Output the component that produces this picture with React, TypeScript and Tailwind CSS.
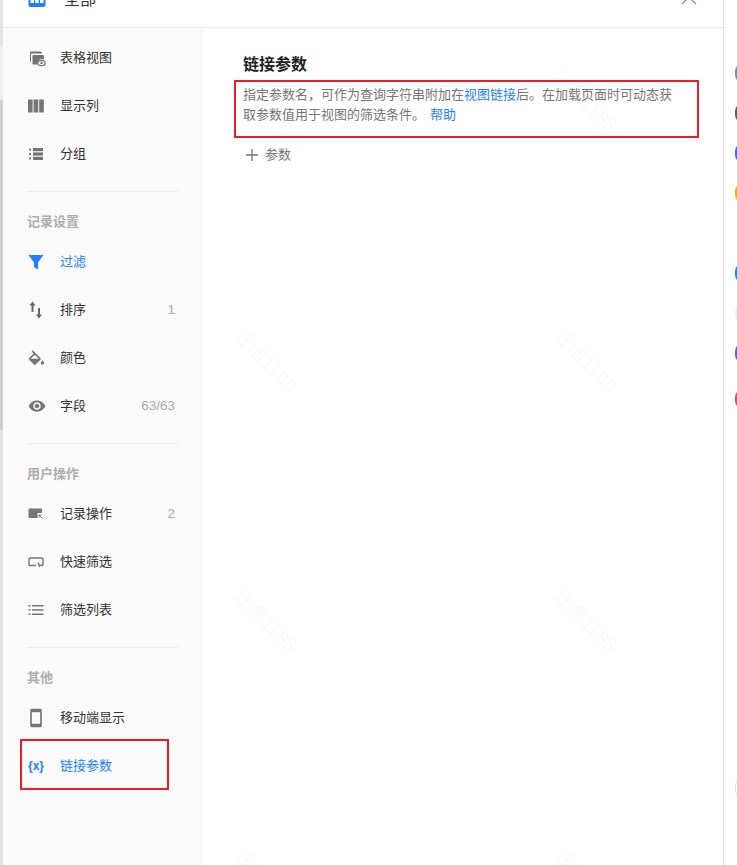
import type { ReactNode } from 'react';
import { MdSmartphone, MdVisibility } from 'react-icons/md';

const font = { fontFamily: '"Liberation Sans", "Noto Sans CJK SC", sans-serif' };

const IconTable = () => (
  <svg width="18" height="18" viewBox="0 0 18 18" fill="none">
    <path d="M3 2.500h9.500a1.500 1.500 0 0 1 1.500 1.500v.5H4a1 1 0 0 0-1 1V13H2.500A.5.5 0 0 1 2 12.500V3.500a1 1 0 0 1 1-1z" fill="#757575" />
    <path d="M5.500 6H15a1 1 0 0 1 1 1v3.500a4.500 4.500 0 0 0-6.500 5H5.500a1 1 0 0 1-1-1V7a1 1 0 0 1 1-1z" fill="#757575" />
    <ellipse cx="13.500" cy="14" rx="3.700" ry="2.600" stroke="#757575" strokeWidth="1.200" />
    <circle cx="13.500" cy="14" r="1.200" fill="#757575" />
  </svg>
);

const IconColumns = () => (
  <svg width="16" height="14" viewBox="0 0 16 14" fill="#757575">
    <rect x="0" y="0.500" width="4.600" height="13" />
    <rect x="5.600" y="0.500" width="4.600" height="13" />
    <rect x="11.200" y="0.500" width="4.600" height="13" />
  </svg>
);

const IconGroup = () => (
  <svg width="16" height="16" viewBox="0 0 16 16" fill="#757575">
    <rect x="1" y="2.500" width="2" height="2" />
    <rect x="1" y="7" width="2" height="2" />
    <rect x="1" y="11.500" width="2" height="2" />
    <rect x="5" y="2" width="10" height="3.200" />
    <rect x="5" y="6.400" width="10" height="3.200" />
    <rect x="5" y="10.800" width="10" height="3.200" />
  </svg>
);

const IconFilter = () => (
  <svg width="16" height="16" viewBox="0 0 16 16" fill="#1e80ff">
    <path d="M0.500 1h15L10 8.500V15.500L6 13V8.500z" />
  </svg>
);

const IconSort = () => (
  <svg width="16" height="18" viewBox="0 0 16 18" fill="#666">
    <path d="M4.500 0.500L7.500 4.500H5.500V11H3.500V4.500H1.500z" />
    <path d="M11 17.500L8 13.500H10V7H12V13.500H14z" />
  </svg>
);

const IconFill = () => (
  <svg width="17" height="16" viewBox="2 0 20 18" fill="#757575">
    <path d="M16.560 8.940L7.620 0 6.210 1.410l2.380 2.380-5.150 5.150c-.59.59-.59 1.540 0 2.120l5.500 5.500c.29.29.68.44 1.060.44s.77-.15 1.060-.44l5.500-5.500c.59-.58.59-1.530 0-2.120zM5.210 10L10 5.210 14.790 10H5.210zM19 11.500s-2 2.170-2 3.500c0 1.100.9 2 2 2s2-.9 2-2c0-1.330-2-3.500-2-3.500z" />
  </svg>
);

const IconAction = () => (
  <svg width="16" height="14" viewBox="0 0 16 14">
    <path d="M1.500 1.500H13a1 1 0 0 1 1 1v3.500H9.500V11H1.500a1 1 0 0 1-1-1V2.500a1 1 0 0 1 1-1z" fill="#757575" />
    <path d="M11 8l3.500 3.500M11 8v2.500M11 8h2.500" stroke="#757575" strokeWidth="1" fill="none" />
  </svg>
);

const IconQuick = () => (
  <svg width="16" height="14" viewBox="0 0 16 14" fill="none" stroke="#757575" strokeWidth="1.400">
    <path d="M8 10.500H2a1 1 0 0 1-1-1V4a1 1 0 0 1 1-1h12a1 1 0 0 1 1 1v5.500a1 1 0 0 1-1 1h-1" />
    <path d="M10 7.500l1.500 3.500 1-1.500" />
  </svg>
);

const IconList = () => (
  <svg width="16" height="12" viewBox="0 0 16 12" fill="#757575">
    <rect x="0.500" y="1" width="2" height="1.500" />
    <rect x="0.500" y="5.200" width="2" height="1.500" />
    <rect x="0.500" y="9.500" width="2" height="1.500" />
    <rect x="4" y="1" width="11.500" height="1.500" />
    <rect x="4" y="5.200" width="11.500" height="1.500" />
    <rect x="4" y="9.500" width="11.500" height="1.500" />
  </svg>
);

function Row({ icon, label, count, active }: { icon: ReactNode; label: string; count?: string; active?: boolean }) {
  return (
    <div className="h-[48px] flex items-center pl-[25px] pr-[28px]">
      <div className="w-[32px] flex items-center shrink-0">{icon}</div>
      <span className={`text-[13px] ${active ? 'text-[#1e80ff]' : 'text-[#333]'}`}>{label}</span>
      {count && <span className="ml-auto text-[13.500px] text-[#aaa]">{count}</span>}
    </div>
  );
}

function Section({ title }: { title: string }) {
  return (
    <>
      <div className="mx-[24px] mt-[13px] border-t border-[#eeeeee]" />
      <div className="h-[46px] pl-[24px] pt-[20px] text-[13px] leading-[20px] font-bold text-[#adadad]">{title}</div>
    </>
  );
}

function Watermark({ className }: { className: string }) {
  return (
    <span className={`absolute rotate-[45deg] whitespace-nowrap text-[19.500px] leading-[20px] text-black/[0.035] ${className}`}>
      汪浩1188
    </span>
  );
}

function Dot({ className }: { className: string }) {
  return (
    <div className="h-[40px] shrink-0">
      <div className={`w-[14px] h-[18px] rounded-full ${className}`} />
    </div>
  );
}

export default function App() {
  return (
    <div className="relative w-[737px] h-[865px] overflow-hidden bg-white flex" style={font}>
      <div className="w-[3px] shrink-0 flex flex-col">
        <div className="h-[46px] bg-[#e6e6e6]" />
        <div className="h-[54px] bg-[#efefef]" />
        <div className="h-[330px] bg-[#cfcfcf]" />
        <div className="flex-1 bg-[#e2e2e2]" />
      </div>

      <div className="w-[721px] shrink-0 flex flex-col border-r border-[#dddddd]">
        <div className="h-[28px] shrink-0 border-b border-[#e8e8e8] overflow-hidden">
          <div className="flex items-center -mt-[18px] h-[36px] pl-[25px] pr-[26px]">
            <svg width="18" height="18" viewBox="0 0 18 18" className="shrink-0">
              <rect x="0.500" y="2" width="17" height="14" rx="2" fill="#1e80ff" />
              <rect x="2.500" y="7.500" width="3.500" height="4.500" fill="#fff" />
              <rect x="7.200" y="7.500" width="3.500" height="4.500" fill="#fff" />
              <rect x="12" y="7.500" width="3.500" height="4.500" fill="#fff" />
            </svg>
            <span className="ml-[18px] text-[16px] text-[#333]">全部</span>
            <svg width="16" height="16" viewBox="0 0 16 16" className="ml-auto mb-[6px]" fill="none" stroke="#8c8c8c" strokeWidth="1.300">
              <path d="M1 1l14 14M15 1L1 15" />
            </svg>
          </div>
        </div>

        <div className="flex-1 flex min-h-0">
          <div className="w-[200px] shrink-0 bg-[#fafafa] pt-[6px]">
            <Row icon={<IconTable />} label="表格视图" />
            <Row icon={<IconColumns />} label="显示列" />
            <Row icon={<IconGroup />} label="分组" />
            <Section title="记录设置" />
            <Row icon={<IconFilter />} label="过滤" active />
            <Row icon={<IconSort />} label="排序" count="1" />
            <Row icon={<IconFill />} label="颜色" />
            <Row icon={<MdVisibility size={18} color="#757575" />} label="字段" count="63/63" />
            <Section title="用户操作" />
            <Row icon={<IconAction />} label="记录操作" count="2" />
            <Row icon={<IconQuick />} label="快速筛选" />
            <Row icon={<IconList />} label="筛选列表" />
            <Section title="其他" />
            <Row icon={<MdSmartphone size={20} color="#757575" className="-ml-[2px]" />} label="移动端显示" />
            <Row icon={<span className="text-[12px] font-bold text-[#1e80ff]">{'{x}'}</span>} label="链接参数" active />
          </div>

          <div className="flex-1 pt-[25px] pl-[40px] pr-[50px]">
            <h2 className="text-[16px] leading-[24px] font-bold text-[#222]">链接参数</h2>
            <p className="mt-[8px] text-[13px] leading-[20px] text-[#757575]">
              指定参数名，可作为查询字符串附加在<span className="text-[#1e80ff]">视图链接</span>后。在加载页面时可动态获取参数值用于视图的筛选条件。
              <span className="ml-[5px] text-[#1e80ff]">帮助</span>
            </p>
            <div className="mt-[20px] h-[20px] flex items-center pl-[3px] text-[#757575]">
              <svg width="12" height="12" viewBox="0 0 12 12" stroke="#757575" strokeWidth="1.300">
                <path d="M6 0v12M0 6h12" />
              </svg>
              <span className="ml-[7px] text-[13px]">参数</span>
            </div>
          </div>
        </div>
      </div>

      <div className="flex-1 flex flex-col pt-[64px] pl-[11px]">
        <Dot className="bg-[#78909c]" />
        <Dot className="bg-[#795548]" />
        <Dot className="bg-[#3f6ff0]" />
        <Dot className="bg-[#f9a825]" />
        <Dot className="bg-transparent" />
        <Dot className="bg-[#1e88e5]" />
        <Dot className="bg-[#eceff1]" />
        <Dot className="bg-[#7e57c2]" />
        <div className="h-[40px] shrink-0 pt-[6px]">
          <div className="w-[14px] h-[18px] rounded-full bg-[#ec407a]" />
        </div>
        <div className="mt-[355px] w-[14px] h-[18px] rounded-full border border-[#dddddd]" />
      </div>

      <Watermark className="left-[225px] top-[90px]" />
      <Watermark className="left-[545px] top-[90px]" />
      <Watermark className="left-[225px] top-[350px]" />
      <Watermark className="left-[545px] top-[350px]" />
      <Watermark className="left-[225px] top-[610px]" />
      <Watermark className="left-[545px] top-[610px]" />
      <Watermark className="left-[225px] top-[870px]" />
      <Watermark className="left-[545px] top-[870px]" />

      <div className="absolute left-[20px] top-[739px] w-[149px] h-[51px] border-2 border-[#ed1c24]" />
      <div className="absolute left-[234px] top-[80px] w-[465px] h-[58px] border-2 border-[#ed1c24]" />
    </div>
  );
}
